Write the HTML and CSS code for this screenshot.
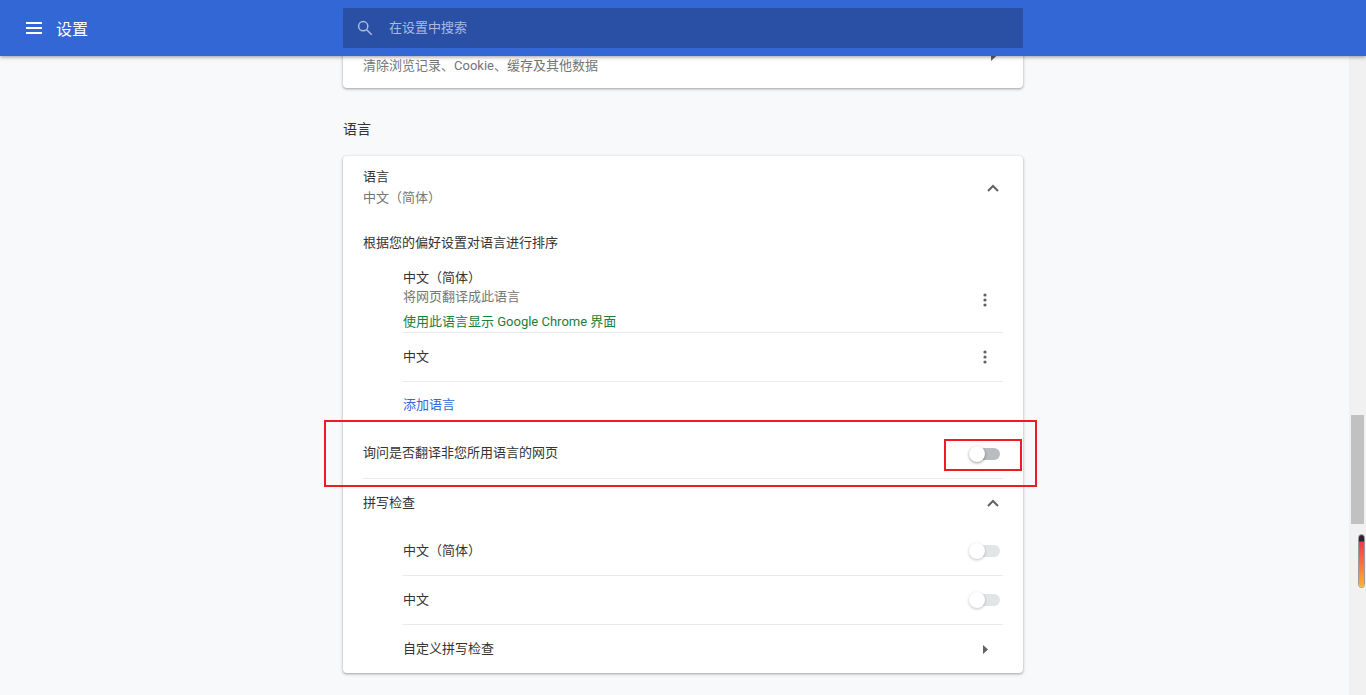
FILE: index.html
```html
<!DOCTYPE html>
<html lang="zh-CN">
<head>
<meta charset="utf-8">
<title>设置</title>
<link rel="stylesheet" href="styles.css">
</head>
<body>
<header class="topbar">
  <div class="topbar-left">
    <svg class="menu-icon" width="16" height="12" viewBox="0 0 16 12"><path d="M0 0h16v2H0zM0 5h16v2H0zM0 10h16v2H0z" fill="#fff"/></svg>
    <span class="topbar-title">设置</span>
  </div>
  <div class="search">
    <svg class="search-icon" width="16" height="16" viewBox="0 0 16 16"><circle cx="6.2" cy="6.2" r="4.6" fill="none" stroke="#a9bbe0" stroke-width="1.5"/><path d="M9.7 9.7l5 5" stroke="#a9bbe0" stroke-width="1.6" fill="none"/></svg>
    <span class="search-text">在设置中搜索</span>
  </div>
</header>
<div class="body-row">
  <main class="main">
    <section class="card card-first">
      <div class="row-two row-clear">
        <div class="line sub clear-sub">清除浏览记录、Cookie、缓存及其他数据</div>
        <svg class="arrow arrow-first" width="5" height="9" viewBox="0 0 5 9"><path d="M0 0l5 4.5L0 9z" fill="#5f6368"/></svg>
      </div>
    </section>
    <h2 class="section-title">语言</h2>
    <section class="card">
      <div class="row-two row-lang">
        <div>
          <div class="line">语言</div>
          <div class="line sub">中文（简体）</div>
        </div>
        <svg class="chevron" width="12" height="8" viewBox="0 0 12 8"><path d="M1 7l5-5 5 5" fill="none" stroke="#5f6368" stroke-width="2"/></svg>
      </div>
      <div class="line sort-title">根据您的偏好设置对语言进行排序</div>
      <div class="indent">
        <div class="lang-item lang-first">
          <div>
            <div class="line">中文（简体）</div>
            <div class="line sub lang-sub">将网页翻译成此语言</div>
            <div class="line green">使用此语言显示 Google Chrome 界面</div>
          </div>
          <svg class="kebab" width="4" height="14" viewBox="0 0 4 14"><circle cx="2" cy="2" r="1.6" fill="#5f6368"/><circle cx="2" cy="7" r="1.6" fill="#5f6368"/><circle cx="2" cy="12" r="1.6" fill="#5f6368"/></svg>
        </div>
        <div class="lang-item lang-second">
          <div class="line">中文</div>
          <svg class="kebab" width="4" height="14" viewBox="0 0 4 14"><circle cx="2" cy="2" r="1.6" fill="#5f6368"/><circle cx="2" cy="7" r="1.6" fill="#5f6368"/><circle cx="2" cy="12" r="1.6" fill="#5f6368"/></svg>
        </div>
        <div class="add-row"><span class="link">添加语言</span></div>
      </div>
      <div class="row-ask">
        <div class="line raised">询问是否翻译非您所用语言的网页</div>
        <span class="toggle"></span>
      </div>
      <div class="row-spell">
        <div class="line">拼写检查</div>
        <svg class="chevron" width="12" height="8" viewBox="0 0 12 8"><path d="M1 7l5-5 5 5" fill="none" stroke="#5f6368" stroke-width="2"/></svg>
      </div>
      <div class="indent">
        <div class="spell-item">
          <div class="line">中文（简体）</div>
          <span class="toggle toggle-off"></span>
        </div>
        <div class="spell-item">
          <div class="line">中文</div>
          <span class="toggle toggle-off"></span>
        </div>
        <div class="spell-item spell-last">
          <div class="line">自定义拼写检查</div>
          <svg class="arrow" width="5" height="9" viewBox="0 0 5 9"><path d="M0 0l5 4.5L0 9z" fill="#5f6368"/></svg>
        </div>
      </div>
    </section>
  </main>
  <aside class="scrollbar"><div class="thumb"></div></aside>
</div>
<div class="mark mark-outer"></div>
<div class="mark mark-inner"></div>
<div class="gauge"><div class="gauge-fill"></div></div>
</body>
</html>
```
FILE: styles.css
```css
* { box-sizing: border-box; }
html, body { margin: 0; height: 100%; }
body {
  width: 1366px;
  height: 695px;
  overflow: hidden;
  display: flex;
  flex-direction: column;
  position: relative;
  background: #f8f9fa;
  font-family: Roboto, "Noto Sans CJK SC", sans-serif;
  font-size: 13px;
  color: #333;
}
.topbar {
  position: relative;
  z-index: 2;
  flex: none;
  height: 56px;
  display: flex;
  background: #3367d6;
  box-shadow: 0 1px 4px rgba(0, 0, 0, .4);
}
.topbar-left {
  width: 343px;
  display: flex;
  align-items: center;
  padding-left: 26px;
}
.menu-icon { margin-right: 14px; margin-top: -1px; }
.topbar-title { color: #fff; font-size: 16px; line-height: 20px; margin-top: 4px; }
.search {
  width: 680px;
  height: 40px;
  margin-top: 8px;
  display: flex;
  align-items: center;
  padding-left: 14px;
  background: #2a50a6;
  border-radius: 1px;
  color: #a9bbe0;
}
.search-icon { margin-right: 16px; }
.search-text { margin-bottom: 3px; }
.body-row { flex: 1; display: flex; min-height: 0; }
.main {
  flex: 1;
  min-width: 0;
  overflow: hidden;
  padding-left: 343px;
}
.card {
  width: 680px;
  background: #fff;
  border-radius: 4px;
  box-shadow: 0 1px 2px rgba(60, 64, 67, .3), 0 1px 3px 1px rgba(60, 64, 67, .15);
}
.card-first { margin-top: -32px; }
.line { line-height: 20px; }
.sub { color: #757575; line-height: 21px; }
.lang-sub { line-height: 19px; margin-top: -1px; }
.green { color: #188038; margin-top: 6px; }
.link { color: #3367d6; }
.raised { margin-bottom: 2px; }
.row-two {
  height: 63px;
  display: flex;
  align-items: center;
  justify-content: space-between;
  padding: 0 20px;
}
.row-clear { height: 64px; }
.clear-sub { margin-top: 18px; }
.arrow-first { margin-right: 7px; }
.chevron { margin-right: 4px; }
.section-title {
  margin: 0;
  padding: 31px 0 17px;
  font-size: 14px;
  font-weight: 400;
  line-height: 20px;
}
.sort-title { padding: 14px 20px 0; }
.indent { padding: 0 20px 0 60px; }
.lang-item {
  display: flex;
  align-items: center;
  justify-content: space-between;
  border-bottom: 1px solid #e8eaed;
  padding-right: 16px;
}
.lang-first { padding-top: 14px; height: 80px; }
.lang-second { height: 49px; }
.add-row { height: 48px; line-height: 46px; }
.row-ask {
  height: 49px;
  margin: 0 20px;
  display: flex;
  align-items: center;
  justify-content: space-between;
  border-bottom: 1px solid #e8eaed;
}
.row-spell {
  height: 48px;
  padding: 0 20px 1px;
  display: flex;
  align-items: center;
  justify-content: space-between;
}
.spell-item {
  height: 49px;
  display: flex;
  align-items: center;
  justify-content: space-between;
  border-bottom: 1px solid #e8eaed;
}
.spell-last { border-bottom: 0; height: 48px; }
.spell-last .arrow { margin-right: 15px; }
.toggle {
  position: relative;
  width: 30px;
  height: 12px;
  margin-right: 3px;
  border-radius: 6px;
  background: #b9bcc1;
}
.toggle::after {
  content: "";
  position: absolute;
  left: -1px;
  top: -2px;
  width: 16px;
  height: 16px;
  border-radius: 50%;
  background: #fff;
  box-shadow: 0 1px 3px rgba(0, 0, 0, .4);
}
.toggle-off { background: #e3e4e6; }
.toggle-off::after { box-shadow: 0 1px 3px rgba(0, 0, 0, .25); }
.scrollbar { flex: none; width: 17px; background: #f1f1f1; padding: 359px 2px 0; }
.thumb { height: 109px; background: #c1c1c1; }
.mark {
  position: absolute;
  z-index: 3;
  border: 2px solid #ed1c24;
}
.mark-outer { left: 324px; top: 420px; width: 713px; height: 67px; }
.mark-inner { left: 944px; top: 439px; width: 78px; height: 32px; }
.gauge {
  position: absolute;
  z-index: 3;
  left: 1358px;
  top: 534px;
  width: 7px;
  height: 54px;
  border: 1px solid #9a9a9a;
  border-radius: 4px;
  overflow: hidden;
  background: #e8e8e8;
}
.gauge-fill {
  height: 100%;
  background: linear-gradient(#232733 0, #232733 12%, #f5364d 13%, #ffb42e 100%);
}
```
